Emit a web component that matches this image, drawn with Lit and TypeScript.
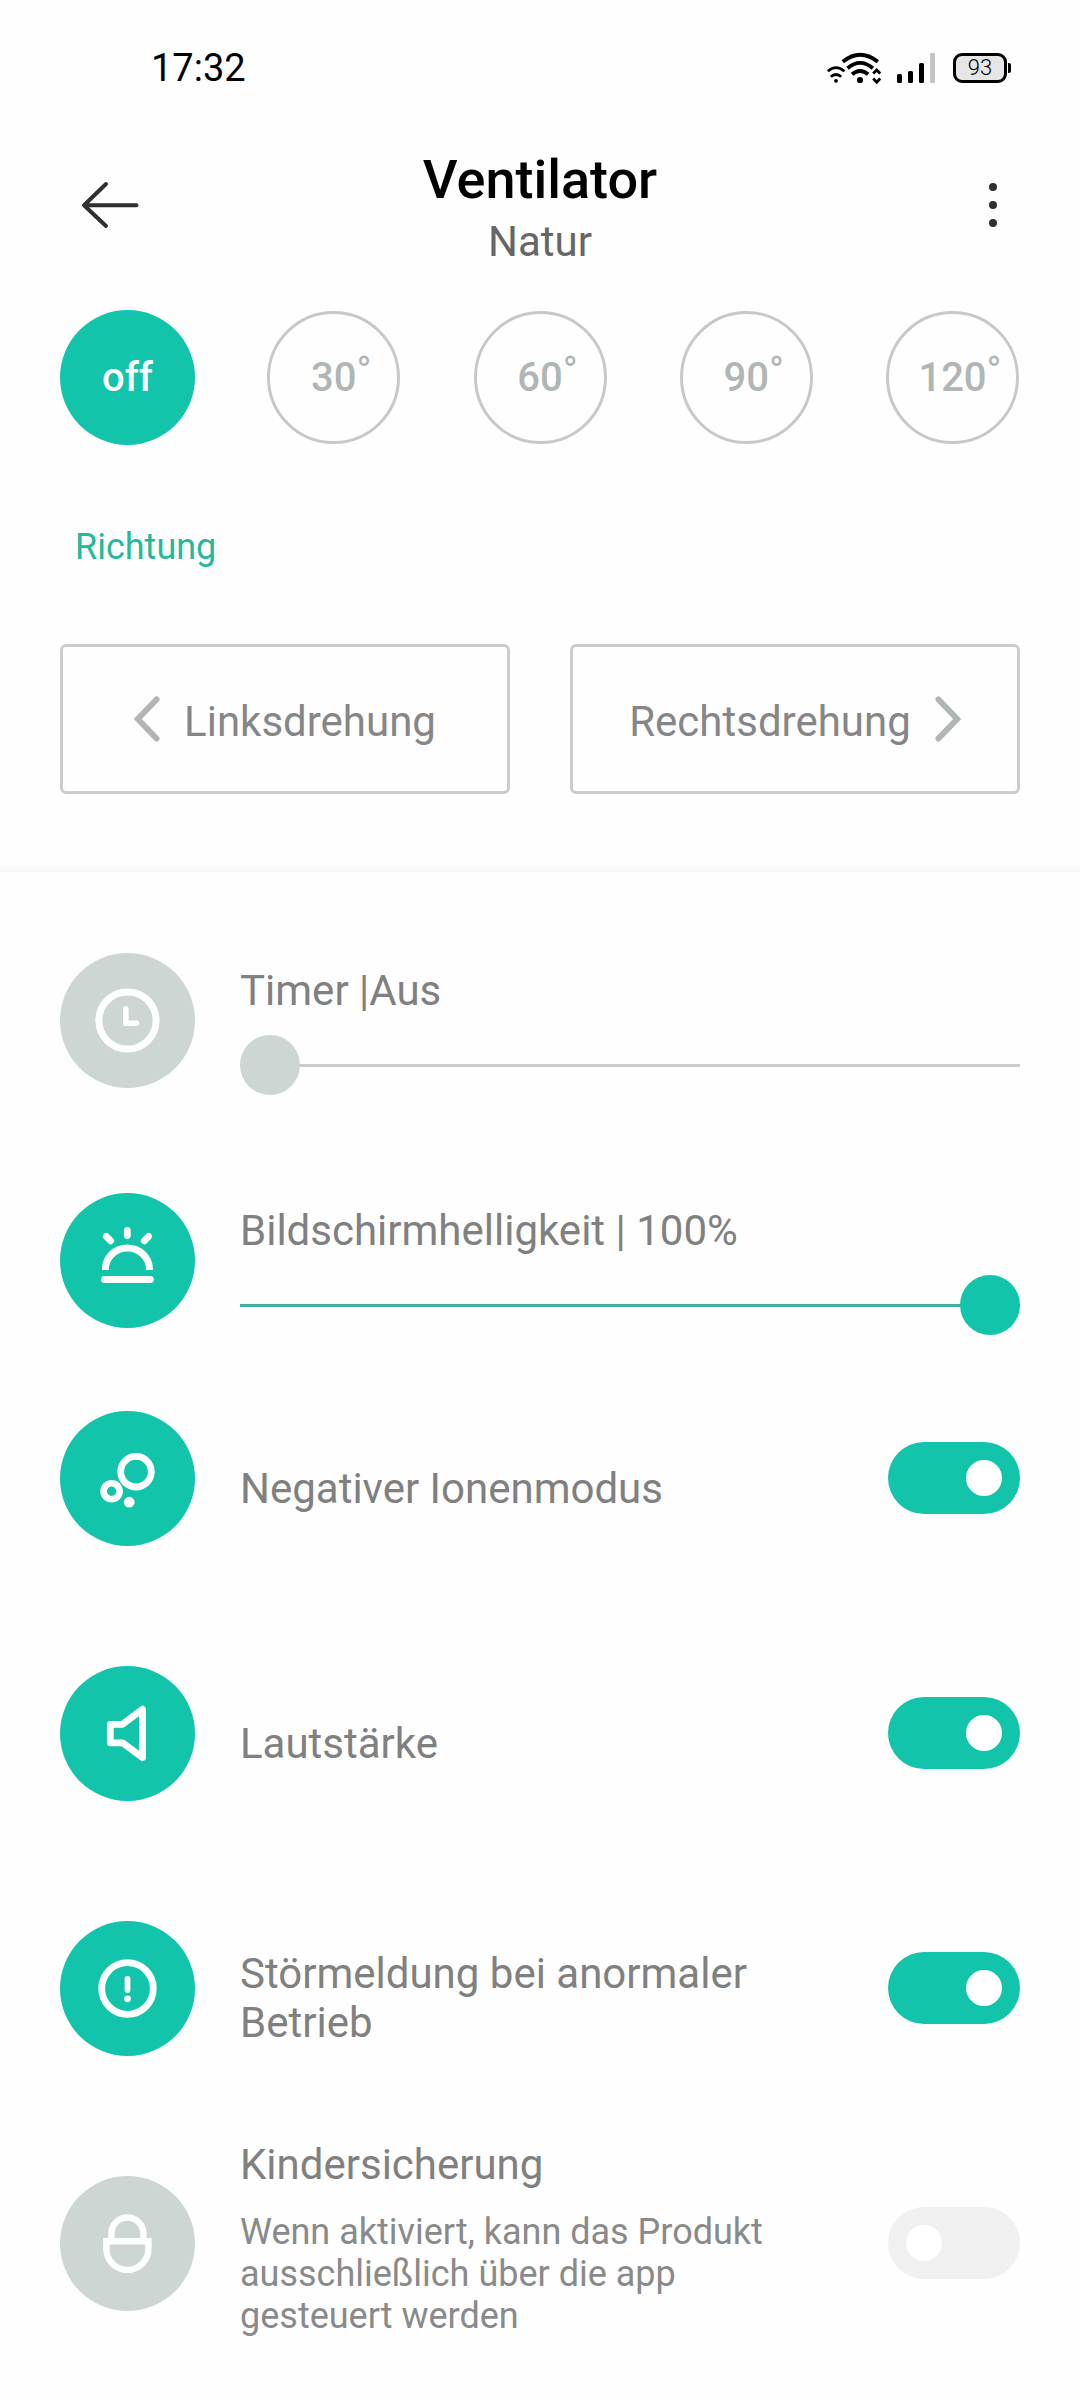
import { LitElement, html, css, svg, nothing } from "lit";
import type { TemplateResult } from "lit";
import { customElement, property, state } from "lit/decorators.js";
import { classMap } from "lit/directives/class-map.js";

type IconName = "clock" | "sun" | "ions" | "speaker" | "alert" | "lock";

/* Glyphs share a 135 x 135 box, the size of the round badge. */
const icons: Record<IconName, TemplateResult> = {
  clock: svg`
    <circle cx="67.5" cy="67.5" r="28.6" stroke-width="7" />
    <path d="M65.8 55.8V70.2H76.5" stroke-width="5.5" stroke-linecap="round" stroke-linejoin="round" />`,
  sun: svg`
    <path d="M67.3 37.5V42.5M46.3 43.3L50.7 47.8M88.6 43.3L84.3 47.8" stroke-width="6.8" stroke-linecap="round" />
    <path d="M45.4 77V76a22 21 0 0 1 44 0V77" stroke-width="7" />
    <path d="M44.5 86.5H90.3" stroke-width="7" stroke-linecap="round" />`,
  ions: svg`
    <circle cx="76" cy="60.7" r="15.3" stroke-width="6.8" />
    <circle cx="51.6" cy="80.2" r="8" stroke-width="6.6" />
    <circle cx="69.2" cy="91.2" r="5.4" fill="#fff" stroke="none" />`,
  speaker: svg`
    <path d="M50.3 58.3H62.5L82.5 43.2V91.6L62.5 76.8H50.3Z" stroke-width="6.8" stroke-linejoin="round" />`,
  alert: svg`
    <circle cx="67.5" cy="67.5" r="25.8" stroke-width="6.8" />
    <path d="M67.5 58V69" stroke-width="5.8" stroke-linecap="round" />
    <circle cx="67.5" cy="77.8" r="3.4" fill="#fff" stroke="none" />`,
  lock: svg`
    <path d="M46.4 65.2H88.4V73a21 21 0 0 1-42 0Z" stroke-width="6.4" />
    <path d="M51.4 65V57.5a16 16 0 0 1 32 0V65" stroke-width="6.4" />`,
};

@customElement("icon-badge")
class IconBadge extends LitElement {
  @property() name: IconName = "clock";
  @property({ type: Boolean }) active = false;

  static styles = css`
    :host {
      display: block;
      flex: none;
    }
    .badge {
      display: block;
      width: 135px;
      height: 135px;
      border-radius: 50%;
      background: #ced6d3;
    }
    .active {
      background: #12c4a9;
    }
  `;

  render() {
    return html`<svg
      class=${classMap({ badge: true, active: this.active })}
      viewBox="0 0 135 135"
      fill="none"
      stroke="#fff"
      aria-hidden="true"
    >
      ${icons[this.name]}
    </svg>`;
  }
}

@customElement("slider-row")
class SliderRow extends LitElement {
  @property() icon: IconName = "clock";
  @property() label = "";
  @property({ type: Number }) value = 0;

  static styles = css`
    :host {
      display: block;
    }
    .row {
      display: flex;
      align-items: flex-start;
      gap: 45px;
    }
    .body {
      flex: 1;
      min-width: 0;
      display: flex;
      flex-direction: column;
      gap: 20px;
      padding-top: 13px;
    }
    .label {
      font-size: 42px;
      line-height: 49px;
      color: #808080;
    }
    .range {
      appearance: none;
      -webkit-appearance: none;
      display: block;
      width: 100%;
      height: 60px;
      margin: 0;
      background: transparent;
      --line: #cccccc;
      --thumb: #ced6d3;
    }
    .on {
      --line: #3fb39d;
      --thumb: #12c4a9;
    }
    .range::-webkit-slider-runnable-track {
      height: 60px;
      background: linear-gradient(var(--line), var(--line)) center / 100% 3px no-repeat;
    }
    .range::-webkit-slider-thumb {
      -webkit-appearance: none;
      width: 60px;
      height: 60px;
      border-radius: 50%;
      background: var(--thumb);
    }
  `;

  render() {
    const on = this.value > 0;
    return html`<div class="row">
      <icon-badge name=${this.icon} ?active=${on}></icon-badge>
      <div class="body">
        <label class="label" for="range">${this.label}</label>
        <input
          id="range"
          class=${classMap({ range: true, on })}
          type="range"
          min="0"
          max="100"
          .value=${String(this.value)}
        />
      </div>
    </div>`;
  }
}

@customElement("toggle-row")
class ToggleRow extends LitElement {
  @property() icon: IconName = "clock";
  @property() label = "";
  @property() hint = "";
  @property({ type: Boolean }) checked = false;

  static styles = css`
    :host {
      display: flex;
      align-items: center;
      gap: 45px;
    }
    .body {
      flex: 1;
      min-width: 0;
      display: flex;
      flex-direction: column;
      gap: 22px;
      padding-top: 20px;
      padding-right: 40px;
    }
    .with-hint {
      padding-top: 0;
      padding-bottom: 9px;
    }
    .label {
      font-size: 42px;
      line-height: 49px;
      color: #808080;
    }
    .hint {
      margin: 0;
      font-size: 36px;
      line-height: 42px;
      color: #8a8a8a;
    }
    .switch {
      appearance: none;
      -webkit-appearance: none;
      flex: none;
      display: flex;
      align-items: center;
      box-sizing: border-box;
      width: 132px;
      height: 72px;
      margin: 0;
      padding: 0 18px;
      border-radius: 36px;
      background: #f0f0f0;
    }
    .switch::before {
      content: "";
      width: 36px;
      height: 36px;
      border-radius: 50%;
      background: #ffffff;
    }
    .switch:checked {
      justify-content: flex-end;
      background: #12c4a9;
    }
  `;

  private onChange(event: Event) {
    this.checked = (event.target as HTMLInputElement).checked;
  }

  render() {
    return html`
      <icon-badge name=${this.icon} ?active=${this.checked}></icon-badge>
      <div class=${classMap({ body: true, "with-hint": this.hint !== "" })}>
        <label class="label" for="switch">${this.label}</label>
        ${this.hint ? html`<p class="hint">${this.hint}</p>` : nothing}
      </div>
      <input
        id="switch"
        class="switch"
        type="checkbox"
        .checked=${this.checked}
        @change=${this.onChange}
      />
    `;
  }
}

@customElement("app-root")
class AppRoot extends LitElement {
  @state() private angle = 0;

  static styles = css`
    :host {
      display: block;
      min-height: 100vh;
      background: #fefefe;
      font-family: Roboto, "Liberation Sans", sans-serif;
    }
    button {
      padding: 0;
      border: 0;
      background: none;
      font: inherit;
      cursor: pointer;
    }
    svg {
      display: block;
      flex: none;
    }
    .status {
      display: flex;
      align-items: center;
      height: 136px;
      padding: 0 69px 0 151px;
      color: #000000;
    }
    .time {
      flex: 1;
      font-size: 38px;
      line-height: 44px;
    }
    .signal {
      margin: 0 18px 0 15px;
    }
    .battery {
      display: flex;
      align-items: center;
    }
    .cell {
      display: flex;
      align-items: center;
      justify-content: center;
      box-sizing: border-box;
      width: 54px;
      height: 30px;
      border: 3px solid #000000;
      border-radius: 9px;
      background: #e6e6e6;
      font-size: 22px;
      font-weight: 300;
      line-height: 24px;
    }
    .nub {
      width: 3px;
      height: 10px;
      margin-left: 1px;
      border-radius: 0 2px 2px 0;
      background: #000000;
    }
    .header {
      display: grid;
      grid-template-columns: 1fr auto 1fr;
      align-items: center;
      padding: 0 60px;
    }
    .back,
    .menu {
      display: flex;
      align-items: center;
      justify-content: center;
      height: 96px;
    }
    .back {
      width: 100px;
    }
    .menu {
      width: 54px;
      justify-self: end;
    }
    .titles {
      padding-top: 14px;
      text-align: center;
    }
    .title {
      margin: 0;
      font-size: 54px;
      font-weight: 500;
      line-height: 60px;
      color: #000000;
    }
    .mode {
      margin: 0;
      font-size: 42px;
      line-height: 64px;
      color: #666666;
    }
    .swing {
      padding: 36px 60px 72px;
    }
    .angles {
      display: flex;
      justify-content: space-between;
    }
    .angle {
      display: flex;
      align-items: center;
      justify-content: center;
      box-sizing: border-box;
      width: 133px;
      height: 133px;
      margin: 1px;
      border: 3px solid #c8c8c8;
      border-radius: 50%;
      font-size: 40px;
      font-weight: 500;
      line-height: 48px;
      color: #b0b6b4;
    }
    .selected {
      width: 135px;
      height: 135px;
      margin: 0;
      border: 0;
      background: #12c4a9;
      color: #ffffff;
    }
    .degree {
      width: 0;
      padding-bottom: 12px;
      font-weight: 400;
    }
    .section {
      margin: 81px 0 76px;
      padding-left: 15px;
      font-size: 36px;
      font-weight: 400;
      line-height: 42px;
      color: #26b899;
    }
    .turns {
      display: grid;
      grid-template-columns: 1fr 1fr;
      gap: 60px;
    }
    .turn {
      display: flex;
      align-items: center;
      justify-content: center;
      gap: 24px;
      box-sizing: border-box;
      height: 150px;
      border: 3px solid #cccccc;
      border-radius: 6px;
      font-size: 42px;
      line-height: 48px;
      color: #868686;
    }
    .turn-label {
      padding-top: 6px;
    }
    .divider {
      height: 6px;
      margin: 0;
      border: 0;
      background: #f9f9f9;
    }
    .settings {
      padding: 81px 60px 0;
    }
    .sliders {
      display: grid;
      gap: 98px;
    }
    .toggles {
      display: grid;
      grid-auto-rows: 1fr;
      gap: 49px;
      margin-top: 40px;
    }
  `;

  private renderStatus() {
    return html`<div class="status">
      <span class="time">17:32</span>
      <svg width="56" height="32" viewBox="0 0 56 32" fill="none" stroke="#000" stroke-linecap="butt" aria-hidden="true">
        <path d="M1.8 19.300q8.200-7.400 16.600 0" stroke-width="2.8" />
        <path d="M4.800 24.800q5.200-4.600 10.400 0" stroke-width="2.8" />
        <circle cx="10" cy="28.8" r="1.9" fill="#000" stroke="none" />
        <path d="M16.800 9.800q17.300-14 35 0" stroke-width="3.8" />
        <path d="M21.500 16.200q12.600-10.600 25.400 0" stroke-width="3.8" />
        <path d="M26 22.300q8-6.600 16.200 0" stroke-width="3.8" />
        <circle cx="34" cy="28" r="3.1" fill="#000" stroke="none" />
        <path d="M47.200 21.600l3.500-3.600l3.500 3.600M47.200 26.600l3.500 3.600l3.500-3.600" stroke-width="2.8" />
      </svg>
      <svg class="signal" width="38" height="30" viewBox="0 0 38 30" aria-hidden="true">
        <rect x="0" y="21" width="5" height="9" rx="1.5" />
        <rect x="11" y="18" width="5" height="12" rx="1.5" />
        <rect x="22" y="10" width="5" height="20" rx="1.5" />
        <rect x="33" y="0" width="5" height="30" rx="1" fill="#c4c4c4" />
      </svg>
      <span class="battery"><span class="cell">93</span><span class="nub"></span></span>
    </div>`;
  }

  private renderAngle(value: number) {
    return html`<button
      class=${classMap({ angle: true, selected: this.angle === value })}
      aria-pressed=${this.angle === value ? "true" : "false"}
      @click=${() => (this.angle = value)}
    >
      ${value === 0 ? html`<span>off</span>` : html`<span>${value}</span><span class="degree">°</span>`}
    </button>`;
  }

  render() {
    return html`
      ${this.renderStatus()}
      <header class="header">
        <button class="back" aria-label="Zurück">
          <svg width="58" height="48" viewBox="0 0 58 48" fill="none" stroke="#303030" stroke-width="4" stroke-linecap="round" stroke-linejoin="round" aria-hidden="true">
            <path d="M25 3L3 24.200L25 45M3 24.200H55.500" />
          </svg>
        </button>
        <div class="titles">
          <h1 class="title">Ventilator</h1>
          <p class="mode">Natur</p>
        </div>
        <button class="menu" aria-label="Mehr">
          <svg width="10" height="48" viewBox="0 0 10 48" fill="#303030" aria-hidden="true">
            <circle cx="5" cy="6" r="4" />
            <circle cx="5" cy="24" r="4" />
            <circle cx="5" cy="42" r="4" />
          </svg>
        </button>
      </header>
      <main>
        <section class="swing">
          <div class="angles">${[0, 30, 60, 90, 120].map((value) => this.renderAngle(value))}</div>
          <h2 class="section">Richtung</h2>
          <div class="turns">
            <button class="turn">
              <svg width="26" height="46" viewBox="0 0 26 46" fill="none" stroke="#b4b4b4" stroke-width="6" stroke-linecap="round" aria-hidden="true">
                <path d="M22.500 3.500L3.800 23L22.500 42.500" />
              </svg>
              <span class="turn-label">Linksdrehung</span>
            </button>
            <button class="turn">
              <span class="turn-label">Rechtsdrehung</span>
              <svg width="26" height="46" viewBox="0 0 26 46" fill="none" stroke="#b0b6b5" stroke-width="6" stroke-linecap="round" aria-hidden="true">
                <path d="M3.500 3.500L22.200 23L3.500 42.500" />
              </svg>
            </button>
          </div>
        </section>
        <hr class="divider" />
        <section class="settings">
          <div class="sliders">
            <slider-row icon="clock" label="Timer |Aus" .value=${0}></slider-row>
            <slider-row icon="sun" label="Bildschirmhelligkeit | 100%" .value=${100}></slider-row>
          </div>
          <div class="toggles">
            <toggle-row icon="ions" label="Negativer Ionenmodus" checked></toggle-row>
            <toggle-row icon="speaker" label="Lautstärke" checked></toggle-row>
            <toggle-row icon="alert" label="Störmeldung bei anormaler Betrieb" checked></toggle-row>
            <toggle-row
              icon="lock"
              label="Kindersicherung"
              hint="Wenn aktiviert, kann das Produkt ausschließlich über die app gesteuert werden"
            ></toggle-row>
          </div>
        </section>
      </main>
    `;
  }
}
